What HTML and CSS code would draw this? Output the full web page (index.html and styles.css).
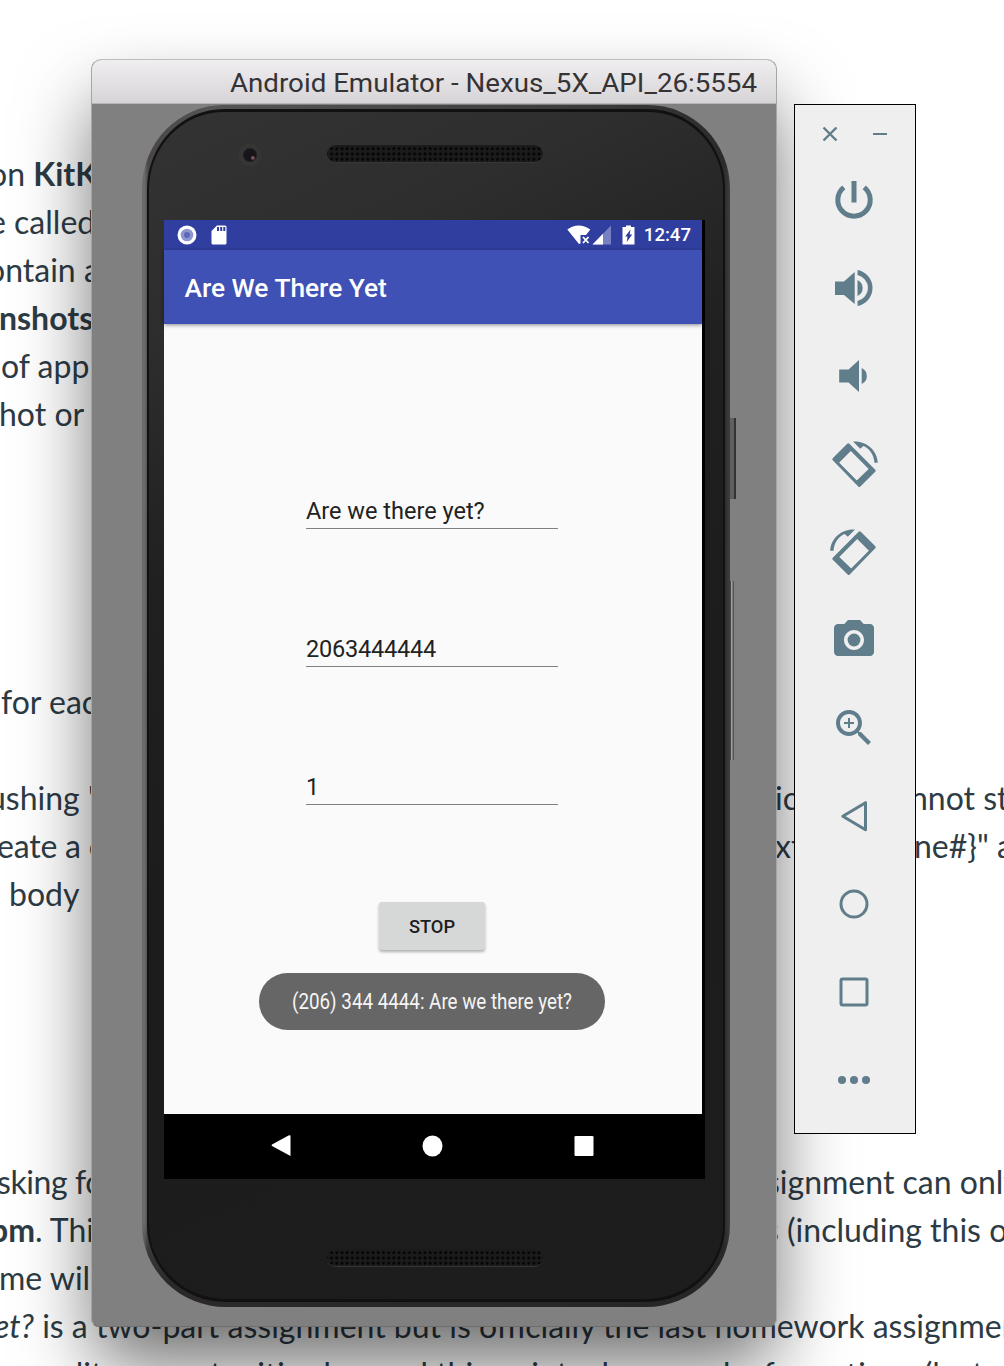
FILE: index.html
```html
<!DOCTYPE html>
<html lang="en">
<head>
<meta charset="utf-8">
<title>Android Emulator</title>
<link rel="stylesheet" href="styles.css">
</head>
<body>
<main class="document">
  <p class="line"><span class="start l0">on <b>KitKat</b></span></p>
  <p class="line"><span class="start l1">e called</span></p>
  <p class="line"><span class="start l2">ontain a</span></p>
  <p class="line"><span class="start l3"><b>nshots</b></span></p>
  <p class="line"><span class="start l4">of app</span></p>
  <p class="line"><span class="start l5">hot or</span></p>
  <p class="line skip5"><span class="start l6">for each</span></p>
  <p class="line skip1"><span class="start l7">ushing "</span><span class="end r7">ic</span><span class="tail t7">nnot start</span></p>
  <p class="line"><span class="start l8">eate a c</span><span class="end r8">xt</span><span class="tail t8">ne#}" and</span></p>
  <p class="line"><span class="start l9">body</span></p>
  <p class="line skip5"><span class="start l10">sking for</span><span class="end r10">signment can only</span></p>
  <p class="line"><span class="start l11"><b>pm</b>. This</span><span class="end r11">s (including this one</span></p>
  <p class="line"><span class="start l12">me will</span></p>
  <p class="line full l13"><i>et?</i> is a two-part assignment but is officially the last homework assignment</p>
  <p class="line full l14">quality opportunities beyond this point, please make formations (lecture</p>
</main>

<section class="window">
  <header class="titlebar">
    <svg width="530" height="42"><text x="1" y="31.5" textLength="527" lengthAdjust="spacingAndGlyphs">Android Emulator - Nexus_5X_API_26:5554</text></svg>
  </header>
  <div class="stage">
    <div class="phone">
      <div class="side-key power-key"></div>
      <div class="side-key volume-key"></div>
      <div class="face">
        <div class="top-bezel"><span class="lens"></span><span class="grille"></span></div>
        <div class="display">
          <div class="screen">
            <div class="status">
              <svg width="20" height="20" viewBox="0 0 20 20"><circle cx="10" cy="10" r="9.5" fill="#fff"/><circle cx="10" cy="10" r="6.3" fill="#8e96d0"/><circle cx="10" cy="10" r="3" fill="#5c68b8"/></svg>
              <svg class="sd" width="16" height="20" viewBox="0 0 16 20"><path fill="#fff" d="M6 .5h8q1.5 0 1.500 1.500V18q0 1.500-1.500 1.500H2Q.5 19.500.5 18V6z"/><path stroke="#303f9f" stroke-width="2" d="M7 2v4M10.200 2v4M13.300 2v4"/></svg>
              <svg class="wifi" width="24" height="20" viewBox="0 0 24 20"><path fill="#fff" d="M.3 4.500Q11.500-3.500 23.300 4.500L19 10h-5.500v8.500L12 19z"/><path stroke="#fff" stroke-width="1.800" d="m16 12 5.500 6m0-6L16 18"/></svg>
              <svg class="cell" width="20" height="20" viewBox="0 0 20 20"><path fill="#7780c0" d="M19 .5v19H.5z"/><path fill="#fff" d="M11 8.700v10.800H.5z"/></svg>
              <svg class="battery" width="14" height="20" viewBox="0 0 14 20"><path fill="#fff" d="M4 .5h5v1.500h3.500V19.500H.5V2H4z"/><path fill="#303f9f" d="M8.500 4.500l-.8 5h2.500L4.800 17l.7-5.500H3.200z"/></svg>
              <span class="clock">12:47</span>
            </div>
            <div class="appbar">Are We There Yet</div>
            <div class="form">
              <div class="field">Are we there yet?</div>
              <div class="field number">2063444444</div>
              <div class="field number">1</div>
              <div class="button">STOP</div>
              <div class="toast"><svg width="282" height="30"><text x="1" y="22" textLength="280" lengthAdjust="spacingAndGlyphs">(206) 344 4444: Are we there yet?</text></svg></div>
            </div>
          </div>
          <div class="navbar">
            <svg width="22" height="24" viewBox="0 0 22 24"><path fill="#fff" d="M19.500 1.500v20.500L1 12q-1-.7 0-1.400L18 1.300z"/></svg>
            <svg width="22" height="24" viewBox="0 0 22 24"><ellipse cx="10.500" cy="12" rx="10" ry="10.500" fill="#fff"/></svg>
            <svg width="22" height="24" viewBox="0 0 22 24"><rect x="1.500" y="2" width="19" height="20" rx="1.200" fill="#fff"/></svg>
          </div>
        </div>
        <div class="bottom-bezel"><span class="grille"></span></div>
      </div>
    </div>
  </div>
</section>

<aside class="toolbar">
  <div class="controls">
    <svg width="16" height="16" viewBox="0 0 16 16"><path d="m1.500 1.500 13 13m0-13-13 13" stroke-width="2.400"/></svg>
    <svg width="16" height="16" viewBox="0 0 16 16"><path d="M1 8h14" stroke-width="2"/></svg>
  </div>
  <svg class="tool line-icon" viewBox="0 0 48 48"><path stroke-width="5" d="M13.800 11.400A16.200 16.200 0 1 0 34.200 11.400M24 5v21.500"/></svg>
  <svg class="tool" viewBox="0 0 48 48"><path d="M5 17.500h9L24.700 8v32L14 31H5zM27.500 16a8.800 8.800 0 0 1 0 16zM27.500 6a18.300 18.300 0 0 1 0 36v-5a13.300 13.300 0 0 0 0-26z"/></svg>
  <svg class="tool" viewBox="0 0 48 48"><path d="M9.200 17.500h9.300L29 8v32l-10.500-9.500H9.200zM31.700 16a8.800 8.800 0 0 1 0 16z"/></svg>
  <svg class="tool" viewBox="0 0 48 48"><path fill-rule="evenodd" d="M3.800 19.300 18.300 4.800 44.200 30.700 29.300 45.500zM20.800 11 8.800 23 26.700 40.500 38.700 29z"/><path class="device" d="M3.800 19.300 18.300 4.800 44.200 30.700 29.300 45.500z"/><path d="M23 1.500C36.500.5 47.300 10.500 47.800 22.800h-3.300C43.800 14.500 39.500 8.500 33.300 6l-3.100 2.700z"/></svg>
  <svg class="tool mirrored" viewBox="0 0 48 48"><path fill-rule="evenodd" d="M3.800 19.300 18.300 4.800 44.200 30.700 29.300 45.500zM20.800 11 8.800 23 26.700 40.500 38.700 29z"/><path class="device" d="M3.800 19.300 18.300 4.800 44.200 30.700 29.300 45.500z"/><path d="M23 1.500C36.500.5 47.300 10.500 47.800 22.800h-3.300C43.800 14.500 39.500 8.500 33.300 6l-3.100 2.700z"/></svg>
  <svg class="tool" viewBox="0 0 24 24"><circle cx="12" cy="12" r="3.200"/><path d="M9 2L7.170 4H4c-1.100 0-2 .9-2 2v12c0 1.100.9 2 2 2h16c1.100 0 2-.9 2-2V6c0-1.100-.9-2-2-2h-3.170L15 2H9zm3 15c-2.760 0-5-2.240-5-5s2.240-5 5-5 5 2.240 5 5-2.240 5-5 5z"/></svg>
  <svg class="tool" viewBox="0 0 24 24"><path d="M15.500 14h-.79l-.28-.27C15.410 12.590 16 11.110 16 9.500 16 5.910 13.090 3 9.500 3S3 5.910 3 9.500 5.910 16 9.500 16c1.610 0 3.090-.59 4.230-1.570l.27.28v.79l5 4.990L20.490 19l-4.990-5zm-6 0C7.010 14 5 11.990 5 9.500S7.010 5 9.500 5 14 7.010 14 9.500 11.990 14 9.500 14zM12 10h-2v2H9v-2H7V9h2V7h1v2h2v1z"/></svg>
  <svg class="tool line-icon" viewBox="0 0 48 48"><path stroke-width="3" stroke-linejoin="round" d="M12.800 24.200 35.500 10.700v27z"/></svg>
  <svg class="tool line-icon" viewBox="0 0 48 48"><circle cx="24" cy="24" r="13" stroke-width="3"/></svg>
  <svg class="tool line-icon" viewBox="0 0 48 48"><rect x="11" y="11" width="26" height="26" rx="1.500" stroke-width="3"/></svg>
  <svg class="tool" viewBox="0 0 48 48"><circle cx="12" cy="24" r="4"/><circle cx="24" cy="24" r="4"/><circle cx="36" cy="24" r="4"/></svg>
</aside>
</body>
</html>
```
FILE: styles.css
```css
* { box-sizing: border-box; }
body {
  margin: 0;
  position: relative;
  width: 1004px;
  height: 1366px;
  overflow: hidden;
  background: #fff;
  font-family: Roboto, sans-serif;
}
svg { display: block; flex: none; }

.document {
  height: 1366px;
  padding-top: 150px;
  overflow: hidden;
  color: #2d3b45;
  font: 32px/48px Lato, sans-serif;
}
.line {
  display: grid;
  grid-template-columns: 100px 675px 139px 90px;
  height: 48px;
  margin: 0;
  white-space: pre;
}
.line.full { display: block; width: 1100px; }
.start { grid-column: 1; overflow: hidden; }
.end { grid-column: 3; }
.tail { grid-column: 4; }
.skip5 { margin-top: 240px; }
.skip1 { margin-top: 48px; }
.l0 { text-indent: -11px; }
.l1 { text-indent: -11px; }
.l2 { text-indent: -13px; }
.l3 { text-indent: -1px; }
.l4 { text-indent: 1px; }
.l5 { text-indent: -1px; }
.l6 { text-indent: 1px; }
.l7 { text-indent: -12px; }
.l8 { text-indent: -3px; letter-spacing: -.2px; }
.l9 { text-indent: 9px; }
.l10 { text-indent: -3px; letter-spacing: -.4px; }
.l11 { text-indent: -10px; }
.l12 { text-indent: -1px; }
.l13 { text-indent: -6px; }
.l14 { text-indent: 24px; }
.r10 { text-indent: -9px; }
.r11 { text-indent: -10px; }
.t7 { text-indent: -4px; }

.window {
  position: absolute;
  left: 91px;
  top: 59px;
  width: 686px;
  height: 1268px;
  display: flex;
  flex-direction: column;
  border: 1px solid #b4b4b4;
  border-color: #bdbdbd #a6a6a6 #6e6e6e;
  border-radius: 10px 10px 8px 8px;
  background: #808080;
  box-shadow: 0 40px 76px -4px rgba(0, 0, 0, .58);
}
.titlebar {
  display: flex;
  justify-content: flex-end;
  height: 44px;
  padding-right: 17px;
  border-radius: 9px 9px 0 0;
  border-bottom: 1px solid #b8b6b8;
  background: linear-gradient(#f0eef0, #d6d4d6);
}
.titlebar text { font: 26px Roboto, sans-serif; fill: #353335; }
.stage { flex: 1; padding: 1px 0 0 50px; }
.phone {
  position: relative;
  width: 588px;
  height: 1202px;
  padding: 4px 5px 5px;
  border-radius: 82px 82px 84px 84px / 84px 84px 82px 82px;
  background:
    linear-gradient(transparent 93%, rgba(38, 36, 37, .9) 98%),
    linear-gradient(90deg, #706c6e 0, #6b686a 3px, #4a4648 6px, #565455 12%, #464445 50%, #3a3839 80%, #2c2a2b 582px, #403d3f 588px);
}
.face {
  height: 100%;
  display: flex;
  flex-direction: column;
  border: solid #111112;
  border-width: 3px 2px;
  border-radius: 77px 77px 79px 79px / 80px 80px 77px 77px;
  background: linear-gradient(155deg, #333334 0, #2e2e2f 15%, #202021 33%, #1c1c1d 55%, #1d1d1e 100%);
}
.top-bezel {
  height: 108px;
  display: flex;
  align-items: flex-start;
  padding: 31px 0 0 89px;
  gap: 67px;
}
.lens {
  width: 24px;
  height: 24px;
  margin-right: -2px;
  border-radius: 50%;
  background: radial-gradient(circle at 62% 62%, #84555f 0 1px, transparent 2.5px), radial-gradient(circle, #17151a 0 6px, #363536 7.500px 11px, #303031 12px);
}
.grille {
  display: block;
  width: 216px;
  height: 18px;
  margin-top: 2px;
  border-radius: 9px;
  background: radial-gradient(circle, #040404 1.100px, #1b1b1c 1.800px) 2px 1px / 5.200px 5.300px;
  border-bottom: 1px solid #363636;
}
.display { width: 541px; margin-left: 15px; background: #000; }
.screen { width: 538px; height: 894px; background: #fafafa; }
.status {
  display: flex;
  align-items: center;
  height: 30px;
  padding: 0 11px 0 13px;
  background: #303f9f;
}
.sd { margin-left: 14px; }
.wifi { margin-left: auto; }
.cell { margin-left: 1px; }
.battery { margin-left: 10px; }
.clock { margin-left: 8px; color: #fff; font-weight: 500; font-size: 18.600px; line-height: 32px; }
.appbar {
  height: 74px;
  padding: 1px 0 0 20.500px;
  background: #3f51b5;
  box-shadow: 0 1px 4px rgba(0, 0, 0, .45);
  color: #fff;
  font-size: 26.300px;
  font-weight: 500;
  line-height: 75px;
}
.form { display: flex; flex-direction: column; align-items: center; padding: 166px 2px 0 0; }
.field {
  width: 252px;
  height: 39px;
  margin: 0 0 99px;
  border-bottom: 1px solid #808080;
  color: #222;
  font-size: 23.500px;
  line-height: 42px;
}
.number { letter-spacing: -.2px; }
.button {
  width: 106px;
  height: 48px;
  margin-top: -2px;
  border-radius: 3px;
  background: #d6d7d7;
  box-shadow: 0 2px 3px rgba(0, 0, 0, .3);
  color: #1d1d1d;
  font-size: 18.300px;
  font-weight: 500;
  line-height: 49px;
  text-align: center;
}
.toast {
  width: 346px;
  height: 57px;
  margin-top: 23px;
  padding: 14px 0 0 32px;
  border-radius: 29px;
  background: #666;
}
.toast text { font: 21.500px Roboto, sans-serif; fill: #f5f5f5; }
.navbar {
  height: 65px;
  display: flex;
  justify-content: space-between;
  align-items: center;
  padding: 0 110px 1px 107px;
}
.bottom-bezel { padding: 68px 0 0 178px; }
.side-key { position: absolute; }
.power-key { left: 588px; top: 313px; width: 6px; height: 81px; background: linear-gradient(90deg, #605e5f 4px, #333 4px); }
.volume-key { left: 588px; top: 476px; width: 4px; height: 179px; background: linear-gradient(90deg, #444 1px, #a0a0a0 1px 2px, #555 3px); }

.toolbar {
  position: absolute;
  left: 794px;
  top: 104px;
  width: 122px;
  height: 1030px;
  display: flex;
  flex-direction: column;
  align-items: center;
  gap: 40px;
  border: 1px solid #000;
  padding-right: 2px;
  background: #efefef;
  fill: #607d8b;
}
.controls {
  display: flex;
  gap: 34px;
  height: 31px;
  padding: 21px 0 0 2px;
  stroke: #607d8b;
}
.tool { width: 48px; height: 48px; overflow: visible; }
.line-icon { fill: none; stroke: #607d8b; }
.device { fill: none; stroke: #607d8b; stroke-width: 3; stroke-linejoin: round; }
.mirrored { transform: scaleX(-1); }
```
